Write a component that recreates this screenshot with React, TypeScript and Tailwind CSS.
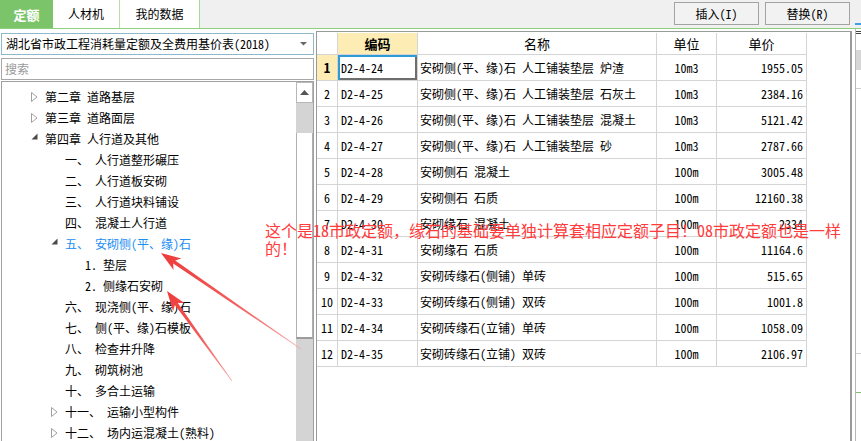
import React from "react";

type TreeItem = { level: 0 | 1 | 2; icon?: "c" | "e"; prefix: string; label: string; blue?: boolean };

const tree: TreeItem[] = [
  { level: 0, icon: "c", prefix: "第二章", label: "道路基层" },
  { level: 0, icon: "c", prefix: "第三章", label: "道路面层" },
  { level: 0, icon: "e", prefix: "第四章", label: "人行道及其他" },
  { level: 1, prefix: "一、", label: "人行道整形碾压" },
  { level: 1, prefix: "二、", label: "人行道板安砌" },
  { level: 1, prefix: "三、", label: "人行道块料铺设" },
  { level: 1, prefix: "四、", label: "混凝土人行道" },
  { level: 1, icon: "e", prefix: "五、", label: "安砌侧(平、缘)石", blue: true },
  { level: 2, prefix: "1.", label: "垫层" },
  { level: 2, prefix: "2.", label: "侧缘石安砌" },
  { level: 1, prefix: "六、", label: "现浇侧(平、缘)石" },
  { level: 1, prefix: "七、", label: "侧(平、缘)石模板" },
  { level: 1, prefix: "八、", label: "检查井升降" },
  { level: 1, prefix: "九、", label: "砌筑树池" },
  { level: 1, prefix: "十、", label: "多合土运输" },
  { level: 1, icon: "c", prefix: "十一、", label: "运输小型构件" },
  { level: 1, icon: "c", prefix: "十二、", label: "场内运混凝土(熟料)" },
];

const rows: [string, string, string, string][] = [
  ["D2-4-24", "安砌侧(平、缘)石 人工铺装垫层 炉渣", "10m3", "1955.05"],
  ["D2-4-25", "安砌侧(平、缘)石 人工铺装垫层 石灰土", "10m3", "2384.16"],
  ["D2-4-26", "安砌侧(平、缘)石 人工铺装垫层 混凝土", "10m3", "5121.42"],
  ["D2-4-27", "安砌侧(平、缘)石 人工铺装垫层 砂", "10m3", "2787.66"],
  ["D2-4-28", "安砌侧石 混凝土", "100m", "3005.48"],
  ["D2-4-29", "安砌侧石 石质", "100m", "12160.38"],
  ["D2-4-30", "安砌缘石 混凝土", "100m", "2334"],
  ["D2-4-31", "安砌缘石 石质", "100m", "11164.6"],
  ["D2-4-32", "安砌砖缘石(侧铺) 单砖", "100m", "515.65"],
  ["D2-4-33", "安砌砖缘石(侧铺) 双砖", "100m", "1001.8"],
  ["D2-4-34", "安砌砖缘石(立铺) 单砖", "100m", "1058.09"],
  ["D2-4-35", "安砌砖缘石(立铺) 双砖", "100m", "2106.97"],
];

function TreeIcon({ kind }: { kind?: "c" | "e" }) {
  if (kind === "c")
    return (
      <svg width="7" height="10" viewBox="0 0 7 10">
        <polygon points="0.5,0.5 6,5 0.5,9.5" fill="#fff" stroke="#a0a0a0" strokeWidth="1" />
      </svg>
    );
  if (kind === "e")
    return (
      <svg width="7" height="10" viewBox="0 0 7 10" className="-mt-[3px]">
        <polygon points="6.5,1.5 6.5,7.5 0.5,7.5" fill="#4a4a4a" />
      </svg>
    );
  return null;
}

export default function App() {
  return (
    <div className="relative w-[861px] h-[441px] overflow-hidden bg-white text-[12px] leading-none text-black font-['Noto_Sans_Mono_CJK_SC','Noto_Sans_CJK_SC',sans-serif]">
      {/* top bar */}
      <div className="flex h-[29px] bg-[#f0f0f0] border-b border-[#8ccf7c]">
        <div className="w-[53px] bg-[#7cc46a] text-white font-bold text-[13px] flex items-center justify-center">定额</div>
        <div className="w-[67px] bg-white border-r border-[#b6e0aa] flex items-center justify-center">人材机</div>
        <div className="w-[80px] bg-white border-r border-[#a6d898] flex items-center justify-center">我的数据</div>
        <div className="flex-1" />
        <button className="mt-[2px] h-[23px] w-[85px] border border-[#a3a3a3] bg-[#f2f2f2] flex items-center justify-center">插入(I)</button>
        <button className="ml-[6px] mt-[2px] h-[23px] w-[85px] border border-[#a3a3a3] bg-[#f2f2f2] flex items-center justify-center">替换(R)</button>
        <div className="w-[11px] flex flex-col">
          <div className="mt-[23px] ml-[5px] h-[2px] bg-[#3aa0e8]" />
        </div>
      </div>

      {/* main */}
      <div className="flex h-[412px]">
        {/* left column */}
        <div className="ml-[1px] w-[313px] flex flex-col pt-[4px]">
          <div className="h-[22px] border border-[#8fb8cc] bg-white flex items-center pl-[4px] pr-[6px]">
            <span className="flex-1 text-[12px]">湖北省市政工程消耗量定额及全费用基价表(2018)</span>
            <svg width="7" height="4" viewBox="0 0 7 4">
              <polygon points="0,0 7,0 3.5,3.5" fill="#666" />
            </svg>
          </div>
          <div className="mt-[3px] h-[22px] border border-[#a8a8a8] bg-white flex items-center pl-[3px] text-[#9a9a9a]">搜索</div>
          <div className="mt-[1px] flex-1 border border-b-0 border-[#a0a0a0] flex overflow-hidden">
            <div className="flex-1 pt-[4px]">
              {tree.map((t, i) => (
                <div
                  key={i}
                  className={`h-[21px] flex items-center ${t.level === 0 ? "pl-[29px]" : t.level === 1 ? "pl-[49px]" : "pl-[69px]"}`}
                >
                  <div className="w-[14px] flex items-center">
                    <TreeIcon kind={t.icon} />
                  </div>
                  <span className={`whitespace-pre ${t.blue ? "text-[#1b8ef2]" : ""}`}>
                    {t.prefix} {t.label}
                  </span>
                </div>
              ))}
            </div>
            {/* scrollbar */}
            <div className="w-[17px] flex flex-col bg-[#d4d4d4]">
              <div className="h-[21px] bg-white border border-[#b8b8b8] flex items-center justify-center">
                <svg width="9" height="5" viewBox="0 0 9 5">
                  <polygon points="0,5 9,5 4.5,0" fill="#555" />
                </svg>
              </div>
              <div className="mt-[30px] h-[206px] bg-white border-x border-[#b0b0b0] border-b-2 border-b-[#9c9c9c]" />
            </div>
          </div>
        </div>

        {/* right table */}
        <div className="ml-[2px] mt-[2px] w-[536px] border border-r-2 border-b-0 border-[#9a9a9a] pt-[1px] flex flex-col">
          <div className="grid grid-cols-[21px_80px_239px_60px_90px] h-[22px] text-[13px]">
            <div className="border-r border-b border-[#d4d4d4]" />
            <div className="border-r border-b border-[#d4d4d4] bg-[#fdedb5] font-bold flex items-center justify-center">编码</div>
            <div className="border-r border-b border-[#d4d4d4] flex items-center justify-center">名称</div>
            <div className="border-r border-b border-[#d4d4d4] flex items-center justify-center">单位</div>
            <div className="border-r border-b border-[#d4d4d4] flex items-center justify-center">单价</div>
          </div>
          {rows.map((r, i) => (
            <div key={i} className="grid grid-cols-[21px_80px_239px_60px_90px] h-[26px]">
              <div
                className={`border-r border-b border-[#d4d4d4] flex items-center justify-center ${i === 0 ? "bg-[#fdedb5] font-bold text-[13px]" : ""}`}
              >
                {i + 1}
              </div>
              <div
                className={`border-r border-b border-[#d4d4d4] flex items-center pl-[3px] ${i === 0 ? "shadow-[inset_2px_2px_0_#2c9bd6,inset_-2px_-2px_0_#6e6e6e]" : ""}`}
              >
                {r[0]}
              </div>
              <div className="border-r border-b border-[#d4d4d4] flex items-center pl-[2px] whitespace-pre">{r[1]}</div>
              <div className="border-r border-b border-[#d4d4d4] flex items-center justify-center">{r[2]}</div>
              <div className="border-r border-b border-[#d4d4d4] flex items-center justify-end pr-[3px]">{r[3]}</div>
            </div>
          ))}
        </div>

        {/* right strip */}
        <div className="w-[9px] flex flex-col pl-[3px]">
          <div className="flex-1 border-l border-[#b8b8b8] flex flex-col">
            <div className="mt-[2px] h-px bg-[#444]" />
            <div className="mt-[1px] h-px bg-[#444]" />
            <div className="mt-[16px] h-[20px] bg-[#d6d6d6]" />
            <div className="mt-[18px] h-px bg-[#cfcfcf]" />
            <div className="mt-[264px] h-px bg-[#cfcfcf]" />
            <div className="mt-[38px] h-px bg-[#7cc46a]" />
          </div>
        </div>
      </div>

      {/* annotation arrows */}
      <svg className="absolute left-0 top-0 pointer-events-none" width="861" height="441" viewBox="0 0 861 441">
        <defs>
          <linearGradient id="g1" gradientUnits="userSpaceOnUse" x1="301" y1="349" x2="161" y2="253">
            <stop offset="0" stopColor="#f7a3a3" />
            <stop offset="0.5" stopColor="#f25a5a" />
            <stop offset="1" stopColor="#ee3b3b" />
          </linearGradient>
          <linearGradient id="g2" gradientUnits="userSpaceOnUse" x1="232" y1="381" x2="167" y2="291">
            <stop offset="0" stopColor="#f7a3a3" />
            <stop offset="0.5" stopColor="#f25a5a" />
            <stop offset="1" stopColor="#ee3b3b" />
          </linearGradient>
        </defs>
        <polygon
          points="301.17,348.75 175.21,260.57 181.45,258.54 161,253 173.53,270.08 173.17,263.53 300.83,349.25"
          fill="url(#g1)"
        />
        <polygon
          points="232.24,380.82 177.83,302.92 184.38,303.11 167,291 173.04,311.31 174.91,305.02 231.76,381.18"
          fill="url(#g2)"
        />
      </svg>

      {/* annotation text */}
      <div className="absolute left-[265px] top-[221px] text-[16px] leading-[18px] text-[#ff3b3b] whitespace-nowrap pointer-events-none">
        <div>这个是18市政定额，缘石的基础要单独计算套相应定额子目！08市政定额也是一样</div>
        <div>的！</div>
      </div>
    </div>
  );
}
